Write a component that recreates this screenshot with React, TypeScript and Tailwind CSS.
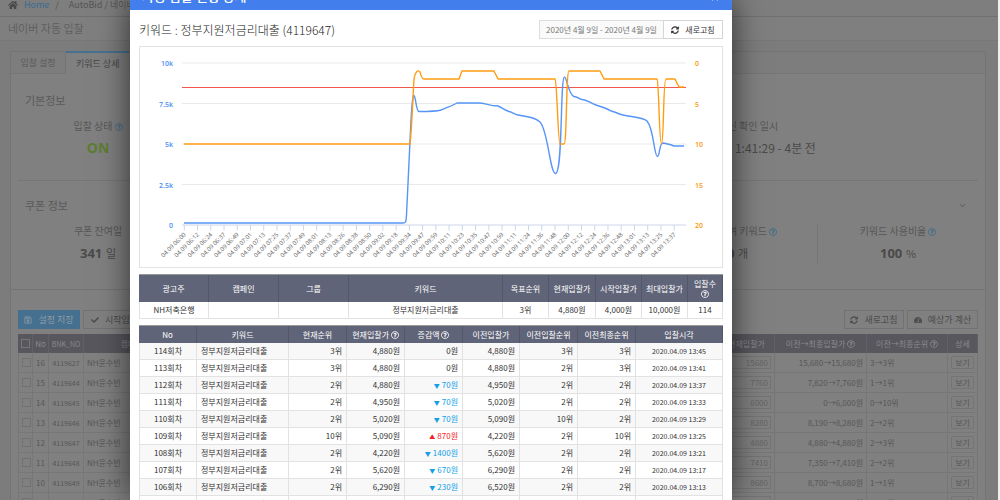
import { useState } from "react";
import type { ReactNode } from "react";
import {
  FaCheck,
  FaChevronDown,
  FaHome,
  FaRegQuestionCircle,
  FaRegSave,
  FaSyncAlt,
  FaTachometerAlt,
  FaTimes,
} from "react-icons/fa";

const KEYWORD = "정부지원저금리대출";

type Bid = {
  no: number;
  rank: number;
  price: string;
  diff: number;
  prevPrice: string;
  prevRank: number;
  prevFinalRank: number;
  time: string;
};

const BIDS: Bid[] = [
  { no: 114, rank: 3, price: "4,880", diff: 0, prevPrice: "4,880", prevRank: 3, prevFinalRank: 3, time: "13:45" },
  { no: 113, rank: 3, price: "4,880", diff: 0, prevPrice: "4,880", prevRank: 2, prevFinalRank: 3, time: "13:41" },
  { no: 112, rank: 2, price: "4,880", diff: -70, prevPrice: "4,950", prevRank: 2, prevFinalRank: 2, time: "13:37" },
  { no: 111, rank: 2, price: "4,950", diff: -70, prevPrice: "5,020", prevRank: 2, prevFinalRank: 2, time: "13:33" },
  { no: 110, rank: 2, price: "5,020", diff: -70, prevPrice: "5,090", prevRank: 10, prevFinalRank: 2, time: "13:29" },
  { no: 109, rank: 10, price: "5,090", diff: 870, prevPrice: "4,220", prevRank: 2, prevFinalRank: 10, time: "13:25" },
  { no: 108, rank: 2, price: "4,220", diff: -1400, prevPrice: "5,620", prevRank: 2, prevFinalRank: 2, time: "13:21" },
  { no: 107, rank: 2, price: "5,620", diff: -670, prevPrice: "6,290", prevRank: 2, prevFinalRank: 2, time: "13:17" },
  { no: 106, rank: 2, price: "6,290", diff: -230, prevPrice: "6,520", prevRank: 2, prevFinalRank: 2, time: "13:13" },
  { no: 105, rank: 2, price: "6,520", diff: -80, prevPrice: "6,600", prevRank: 2, prevFinalRank: 2, time: "13:09" },
];

const KEYWORD_ROWS = [
  { no: 16, bnk: "4119627", bid: "15680", price: "15,680→15,680원", rank: "3→3위" },
  { no: 15, bnk: "4119644", bid: "7760", price: "7,820→7,760원", rank: "1→1위" },
  { no: 14, bnk: "4119645", bid: "6000", price: "0→6,000원", rank: "0→10위" },
  { no: 13, bnk: "4119646", bid: "8280", price: "8,190→8,280원", rank: "2→2위" },
  { no: 12, bnk: "4119647", bid: "4880", price: "4,880→4,880원", rank: "2→3위" },
  { no: 11, bnk: "4119648", bid: "7410", price: "7,350→7,410원", rank: "2→2위" },
  { no: 10, bnk: "4119649", bid: "8680", price: "8,700→8,680원", rank: "1→1위" },
  { no: 9, bnk: "4119650", bid: "8000", price: "8,000→8,000원", rank: "2→2위" },
];

const TIMES = [
  "06:00", "06:12", "06:24", "06:37", "06:49", "07:01", "07:13", "07:25", "07:37", "07:49",
  "08:01", "08:13", "08:26", "08:38", "08:50", "09:02", "09:18", "09:34", "09:47", "09:59",
  "10:11", "10:23", "10:35", "10:47", "10:59", "11:11", "11:24", "11:36", "11:48", "12:00",
  "12:12", "12:24", "12:36", "12:48", "13:01", "13:13", "13:25", "13:37",
];

const AXIS = [
  { y: 63, left: "10k", right: "0" },
  { y: 103.5, left: "7.5k", right: "5" },
  { y: 144, left: "5k", right: "10" },
  { y: 184.5, left: "2.5k", right: "15" },
  { y: 225, left: "0", right: "20" },
];

const PRICE_PATH =
  "M184 223H403C406 223 406 222 406.500 215L411 120C412 102 413 95 414 95.500C416 97 416 111.500 419 111.500C428 111.500 436 111.500 441 110C448 107 452 106 457 103H478C486 103 488 105.500 498 106C502 107.500 504 110 509 111.500C512 112 514 114 518 115C526 117 534 116 540 122C548 130 550 173.500 555.500 173.500C563 173.500 560 77 564.500 77C567 77 568 94 574 96.500C578 97 579 99 582 99.500C587 99.500 590 103 596 105C602 107 606 108 611 111C616 112 618 114 623 115C631 117 642 117 647 121C654 129 654 156.500 657.500 156.500C660 156.500 659 143 663 143C667 144 670 144 674 146H684";

const RANK_PATH =
  "M184 144H410C412 125 413 95 414 79C415 72 418 69 420 72C421 75 421.500 79 424 79H459L462 71H494L498 79H555C557 80 558 144 560 144H564C567 144 566 71 569 71H600L604 79H657C659 80 659 144 661.500 144C664 144 663 79 666 79H675L679 87H684";

function Help() {
  return <FaRegQuestionCircle className="inline size-2 align-[-1px]" />;
}

function BidChart() {
  return (
    <svg
      viewBox="140 47 582 220"
      className="block w-full font-['Open_Sans',sans-serif]"
      role="img"
      aria-label="입찰가 및 순위 차트"
    >
      {AXIS.map((a) => (
        <g key={a.y}>
          <path d={`M182 ${a.y}H686`} stroke={a.y === 225 ? "#ccd6eb" : "#e9e9e9"} />
          <text x="173" y={a.y + 3} textAnchor="end" fontSize="7" fontWeight="600" fill="#4a8ff5">
            {a.left}
          </text>
          <text x="695" y={a.y + 3} fontSize="7" fontWeight="600" fill="#fb9808">
            {a.right}
          </text>
        </g>
      ))}
      {TIMES.map((time, i) => {
        const x = 184.3 + i * 13.24;
        return (
          <g key={time}>
            <path d={`M${x} 225v5.500`} stroke="#ccd6eb" />
            <text
              transform={`translate(${x + 2} 235) rotate(-45)`}
              textAnchor="end"
              fontSize="6"
              fill="#666"
            >
              04.09 {time}
            </text>
          </g>
        );
      })}
      <path d="M182 87.500H686" stroke="#f2564f" />
      <path d={PRICE_PATH} fill="none" stroke="#5795f7" strokeWidth="1.400" strokeLinejoin="round" />
      <path d={RANK_PATH} fill="none" stroke="#ff9c12" strokeWidth="1.400" strokeLinejoin="round" />
    </svg>
  );
}

const TH = "border-r border-[#53576a] p-0 text-center font-normal whitespace-nowrap";
const TD = "border-r border-b border-[#e2e2e2] px-1 py-0";

function SummaryTable() {
  return (
    <table className="mt-1.5 w-full table-fixed border-separate border-spacing-0 border-t border-[#999] text-[8px] leading-[10px]">
      <colgroup>
        <col className="w-[70px]" />
        <col className="w-[70px]" />
        <col className="w-[70px]" />
        <col />
        <col className="w-[46px]" />
        <col className="w-[47px]" />
        <col className="w-[46px]" />
        <col className="w-[46px]" />
        <col className="w-[35px]" />
      </colgroup>
      <thead className="bg-[#5f6478] text-white">
        <tr className="h-[27px]">
          <th className={TH}>광고주</th>
          <th className={TH}>캠페인</th>
          <th className={TH}>그룹</th>
          <th className={TH}>키워드</th>
          <th className={TH}>목표순위</th>
          <th className={TH}>현재입찰가</th>
          <th className={TH}>시작입찰가</th>
          <th className={TH}>최대입찰가</th>
          <th className={TH}>
            입찰수
            <br />
            <Help />
          </th>
        </tr>
      </thead>
      <tbody className="text-center text-[#333]">
        <tr className="h-[17px]">
          <td className={`${TD} border-l`}>NH저축은행</td>
          <td className={TD} />
          <td className={TD} />
          <td className={TD}>{KEYWORD}</td>
          <td className={TD}>3위</td>
          <td className={TD}>4,880원</td>
          <td className={TD}>4,000원</td>
          <td className={TD}>10,000원</td>
          <td className={TD}>114</td>
        </tr>
      </tbody>
    </table>
  );
}

function Diff({ value }: { value: number }) {
  if (value === 0) return <>0원</>;
  return (
    <span className={value > 0 ? "text-[#f52222]" : "text-[#109fe8]"}>
      <span className="mr-0.5 text-[6px]">{value > 0 ? "▲" : "▼"}</span>
      {Math.abs(value)}원
    </span>
  );
}

function HistoryTable() {
  return (
    <table className="mt-1.5 w-full table-fixed border-separate border-spacing-0 border-t border-[#999] text-[8px] leading-[10px]">
      <colgroup>
        <col className="w-[58px]" />
        <col className="w-[92px]" />
        <col className="w-[58px]" />
        <col className="w-[58px]" />
        <col className="w-[58px]" />
        <col className="w-[57px]" />
        <col className="w-[58px]" />
        <col className="w-[58px]" />
        <col />
      </colgroup>
      <thead className="bg-[#5f6478] text-white">
        <tr className="h-[17px]">
          <th className={TH}>No</th>
          <th className={TH}>키워드</th>
          <th className={TH}>현재순위</th>
          <th className={TH}>현재입찰가 <Help /></th>
          <th className={TH}>증감액 <Help /></th>
          <th className={TH}>이전입찰가</th>
          <th className={TH}>이전입찰순위</th>
          <th className={TH}>이전최종순위</th>
          <th className={TH}>입찰시각</th>
        </tr>
      </thead>
      <tbody className="text-right text-[#333]">
        {BIDS.map((b) => (
          <tr key={b.no} className="h-[17px] odd:bg-[#f8f8f8]">
            <td className={`${TD} border-l text-center`}>{b.no}회차</td>
            <td className={`${TD} text-left`}>{KEYWORD}</td>
            <td className={TD}>{b.rank}위</td>
            <td className={TD}>{b.price}원</td>
            <td className={TD}><Diff value={b.diff} /></td>
            <td className={TD}>{b.prevPrice}원</td>
            <td className={TD}>{b.prevRank}위</td>
            <td className={TD}>{b.prevFinalRank}위</td>
            <td className={`${TD} text-center text-[7px]`}>2020.04.09 {b.time}</td>
          </tr>
        ))}
      </tbody>
    </table>
  );
}

function BidModal() {
  return (
    <div
      role="dialog"
      aria-label="자동 입찰 현황 상세"
      className="absolute top-0 right-[26.8%] bottom-0 left-[13%] overflow-hidden bg-white shadow-[0_0_30px_rgba(0,0,0,0.65)]"
    >
      <header className="flex h-2.5 items-end justify-between overflow-hidden bg-[#427fed] px-3 text-white">
        <h2 className="mb-1.5 text-[13px] leading-4 font-medium">자동 입찰 현황 상세</h2>
        <button type="button" aria-label="닫기" className="mb-2">
          <FaTimes className="size-2.5" />
        </button>
      </header>

      <div className="px-[9px] pt-2.5">
        <div className="flex h-[19px] items-center justify-between">
          <h3 className="text-[12px] font-light text-[#222]">
            키워드 : {KEYWORD} (4119647)
          </h3>
          <div className="flex h-full text-[8px]">
            <input
              type="text"
              readOnly
              aria-label="조회 기간"
              defaultValue="2020년 4월 9일 - 2020년 4월 9일"
              className="w-[125px] border border-[#ddd] bg-[#fafafa] text-center text-[#777]"
            />
            <button
              type="button"
              className="-ml-px flex w-[60px] items-center justify-center gap-1.5 border border-[#d5d5d5] bg-white text-[#333]"
            >
              <FaSyncAlt className="size-2" />
              새로고침
            </button>
          </div>
        </div>

        <div className="mt-[7px] border border-[#e2e2e2]">
          <BidChart />
        </div>
        <SummaryTable />
        <HistoryTable />
      </div>
    </div>
  );
}

function Stat({ label, help, children, className = "" }: {
  label: string;
  help?: boolean;
  children?: ReactNode;
  className?: string;
}) {
  return (
    <div className={`text-center ${className}`}>
      <p className="text-[10px] leading-3 whitespace-nowrap text-[#575757]">
        {label}
        {help && <span className="ml-0.5 text-[#406a88]"><Help /></span>}
      </p>
      <div className="mt-1 leading-5 whitespace-nowrap text-[#4a4a4a]">{children}</div>
    </div>
  );
}

const BG_TH = "border-r border-[#606066] p-0 text-center font-normal whitespace-nowrap";
const BG_TD = "border-r border-b border-[#777] px-[3px] py-0";
const BG_BUTTON = "flex h-full items-center justify-center gap-1.5 border border-[#727272]";

function KeywordTable() {
  return (
    <table className="mt-[5px] w-full table-fixed border-separate border-spacing-0 text-[8px] leading-[10px] text-[#575757]">
      <colgroup>
        <col className="w-[15px]" />
        <col className="w-4" />
        <col className="w-[35px]" />
        <col className="w-24" />
        <col />
        <col className="w-[56px]" />
        <col className="w-[92px]" />
        <col className="w-[81px]" />
        <col className="w-[30px]" />
      </colgroup>
      <thead className="bg-[#57575d] text-[#8a8a8d]">
        <tr className="h-[19px]">
          <th className={BG_TH}>
            <input
              type="checkbox"
              aria-label="전체 선택"
              className="mx-auto block size-[9px] appearance-none border border-[#777]"
            />
          </th>
          <th className={BG_TH}>No</th>
          <th className={`${BG_TH} text-[7px]`}>BNK_NO</th>
          <th className={BG_TH}>캠페인</th>
          <th className={BG_TH} />
          <th className={BG_TH}>현재입찰가</th>
          <th className={BG_TH}>이전→최종입찰가 <Help /></th>
          <th className={BG_TH}>이전→최종순위 <Help /></th>
          <th className={BG_TH}>상세</th>
        </tr>
      </thead>
      <tbody>
        {KEYWORD_ROWS.map((row) => (
          <tr key={row.no} className="h-5">
            <td className={`${BG_TD} border-l`}>
              <input
                type="checkbox"
                aria-label={`${row.bnk} 선택`}
                className="block size-[9px] appearance-none border border-[#727272]"
              />
            </td>
            <td className={`${BG_TD} text-center`}>{row.no}</td>
            <td className={`${BG_TD} text-center text-[7px]`}>{row.bnk}</td>
            <td className={BG_TD}>NH윤수빈</td>
            <td className={BG_TD} />
            <td className={BG_TD}>
              <input
                type="text"
                aria-label={`${row.bnk} 현재입찰가`}
                defaultValue={row.bid}
                className="block h-[13px] w-full border border-[#747474] px-0.5 text-right text-[#646464]"
              />
            </td>
            <td className={`${BG_TD} text-right`}>{row.price}</td>
            <td className={BG_TD}>{row.rank}</td>
            <td className={BG_TD}>
              <button type="button" className="block h-[13px] w-full rounded-xs border border-[#747474]">
                보기
              </button>
            </td>
          </tr>
        ))}
      </tbody>
    </table>
  );
}

const TABS = ["입찰 설정", "키워드 상세"];

export default function App() {
  const [activeTab, setActiveTab] = useState(TABS[1]);

  return (
    <div className="relative h-screen overflow-hidden bg-[#f0f0f0] pr-0.5 font-['Noto_Sans_CJK_KR','Noto_Sans',sans-serif]">
      <div className="h-full overflow-hidden bg-[#7c7c7c]">
        {/* Breadcrumb */}
        <nav className="flex h-[17px] items-start gap-1.5 border-b border-[#707070] bg-[#7e7e7e] pl-2 text-[9px] leading-[10px] text-[#555]">
          <FaHome className="size-[10px] text-[#484848]" />
          <a href="#home" className="text-[#3b6a91]">Home</a>
          <span>/</span>
          <span className="pl-1">AutoBid / 네이버 자동 입찰</span>
        </nav>
        <h1 className="h-6 border-b border-[#777] bg-[#7f7f7f] pl-2 text-[11px] leading-[22px] font-light text-[#505050]">
          네이버 자동 입찰
        </h1>

        <main className="mt-2.5 mr-3 ml-2.5 border border-[#747474] bg-[#808080]">
          <div className="flex h-[22px] border-b border-[#767676] bg-[#7d7d7d] text-[9px]">
            {TABS.map((tab) => (
              <button
                key={tab}
                type="button"
                onClick={() => setActiveTab(tab)}
                className={
                  activeTab === tab
                    ? "-mt-px h-[23px] border-t-2 border-[#47718f] bg-[#808080] px-2.5 text-[#444]"
                    : "w-[55px] border-r border-[#747474] text-[#5a5a5a]"
                }
              >
                {tab}
              </button>
            ))}
          </div>

          <div className="px-[7px]">
            <section className="h-[106px] pt-[18px]">
              <h2 className="pl-[7px] text-[11px] leading-4 text-[#5a5a5a]">기본정보</h2>
              <div className="mt-3 grid grid-cols-6">
                <Stat label="입찰 상태" help>
                  <strong className="font-['Open_Sans'] text-[14px] text-[#5d7d31]">ON</strong>
                </Stat>
                <Stat label="최종 갱신 확인 일시" className="col-start-5">
                  <span className="text-[12px]">2020. 04. 09 - 1:41:29 - 4분 전</span>
                </Stat>
              </div>
            </section>

            <section className="h-[109px] border-t border-[#757575] pt-4">
              <div className="flex items-center justify-between pr-3 pl-[7px]">
                <h2 className="text-[11px] leading-4 text-[#5a5a5a]">쿠폰 정보</h2>
                <FaChevronDown className="size-[7px] text-[#666]" />
              </div>
              <div className="mt-3 grid grid-cols-6">
                <Stat label="쿠폰 잔여일">
                  <strong className="font-['Open_Sans'] text-[13px]">341</strong>{" "}
                  <span className="text-[11px]">일</span>
                </Stat>
                <Stat
                  label="쿠폰 잔여 키워드"
                  help
                  className="col-start-5 border-r border-[#757575]"
                >
                  <strong className="font-['Open_Sans'] text-[13px]">0</strong>{" "}
                  <span className="text-[11px]">개</span>
                </Stat>
                <Stat label="키워드 사용비율" help>
                  <strong className="font-['Open_Sans'] text-[13px]">100</strong>{" "}
                  <span className="text-[11px]">%</span>
                </Stat>
              </div>
            </section>
          </div>

          <section className="border-t border-[#747474] px-[7px] pt-5">
            <div className="flex h-[19px] gap-[3px] text-[9px] text-[#4c4c4c]">
              <button
                type="button"
                className="flex w-[62px] items-center justify-center gap-1.5 bg-[#46708f] text-[#8e9ba5]"
              >
                <FaRegSave className="size-2" />
                설정 저장
              </button>
              <button type="button" className={`${BG_BUTTON} w-[90px]`}>
                <FaCheck className="size-2" />
                시작입찰가 적용
              </button>
              <button type="button" className={`${BG_BUTTON} ml-auto w-[60px]`}>
                <FaSyncAlt className="size-2" />
                새로고침
              </button>
              <button type="button" className={`${BG_BUTTON} w-[71px]`}>
                <FaTachometerAlt className="size-2" />
                예상가 계산
              </button>
            </div>
            <KeywordTable />
          </section>
        </main>
      </div>

      <BidModal />
    </div>
  );
}
